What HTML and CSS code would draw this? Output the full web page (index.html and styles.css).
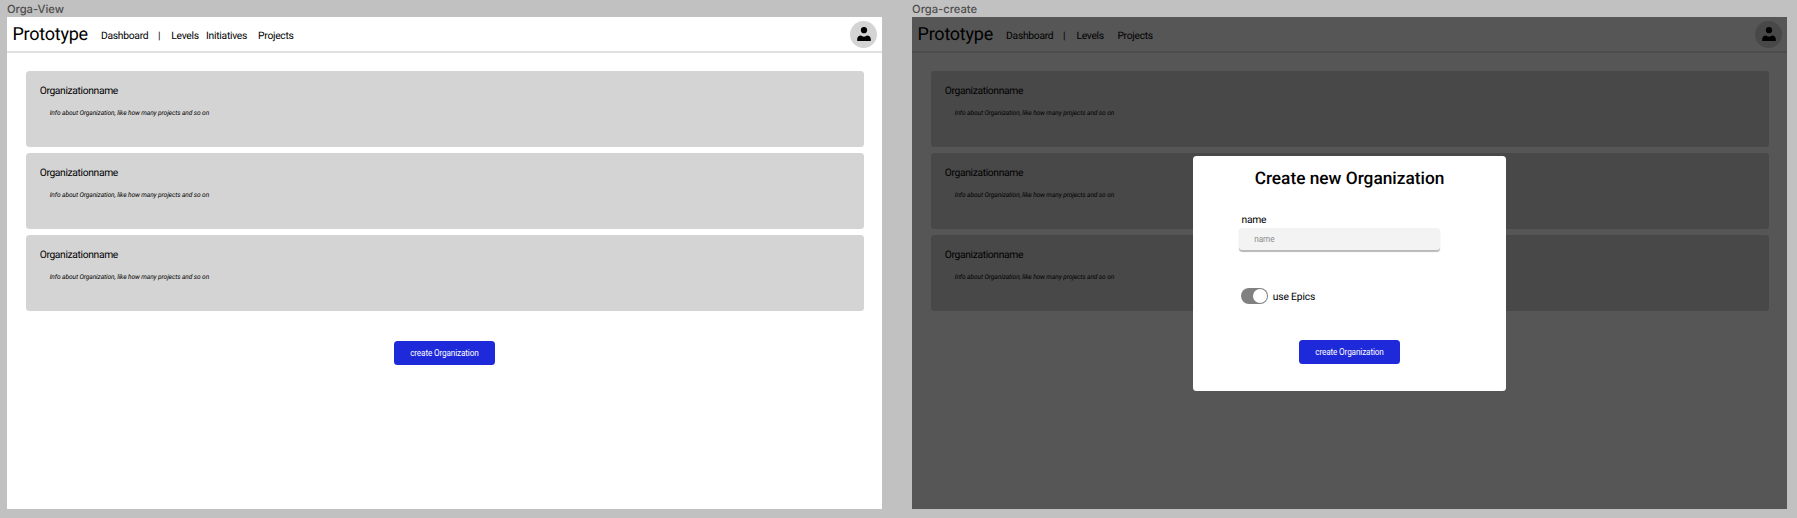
FILE: index.html
```html
<!DOCTYPE html>
<html lang="en">
<head>
<meta charset="utf-8">
<title>Prototype</title>
<link rel="stylesheet" href="styles.css">
</head>
<body>
<main class="canvas">
  <section class="artboard">
    <h2 class="artboard-name">Orga-View</h2>
    <div class="frame">
      <header class="topbar">
        <span class="brand">Prototype</span>
        <nav class="nav">
          <a class="dashboard">Dashboard</a><span class="divider">|</span><a class="levels">Levels</a><a class="initiatives">Initiatives</a><a class="projects">Projects</a>
        </nav>
        <span class="avatar"><svg viewBox="0 0 14 14"><circle cx="7" cy="3.2" r="3.1"/><path d="M0.2 13.9V12C0.2 10.2 1.8 8.8 3.9 8.6C5.5 10 8.5 10 10.1 8.6C12.2 8.8 13.8 10.2 13.8 12V13.9Z"/></svg></span>
      </header>
      <div class="cards">
        <article class="card"><h3>Organizationname</h3><p>Info about Organization, like how many projects and so on</p></article>
        <article class="card"><h3>Organizationname</h3><p>Info about Organization, like how many projects and so on</p></article>
        <article class="card"><h3>Organizationname</h3><p>Info about Organization, like how many projects and so on</p></article>
      </div>
      <button class="button">create Organization</button>
    </div>
  </section>
  <section class="artboard">
    <h2 class="artboard-name">Orga-create</h2>
    <div class="frame">
      <header class="topbar">
        <span class="brand">Prototype</span>
        <nav class="nav">
          <a class="dashboard">Dashboard</a><span class="divider">|</span><a class="levels levels-wide">Levels</a><a class="projects">Projects</a>
        </nav>
        <span class="avatar"><svg viewBox="0 0 14 14"><circle cx="7" cy="3.2" r="3.1"/><path d="M0.2 13.9V12C0.2 10.2 1.8 8.8 3.9 8.6C5.5 10 8.5 10 10.1 8.6C12.2 8.8 13.8 10.2 13.8 12V13.9Z"/></svg></span>
      </header>
      <div class="cards">
        <article class="card"><h3>Organizationname</h3><p>Info about Organization, like how many projects and so on</p></article>
        <article class="card"><h3>Organizationname</h3><p>Info about Organization, like how many projects and so on</p></article>
        <article class="card"><h3>Organizationname</h3><p>Info about Organization, like how many projects and so on</p></article>
      </div>
      <div class="overlay">
        <form class="modal">
          <h1>Create new Organization</h1>
          <label class="field-label" for="name">name</label>
          <input class="field" id="name" type="text" placeholder="name">
          <div class="toggle-row"><span class="toggle"></span><span class="toggle-label">use Epics</span></div>
          <button class="button" type="button">create Organization</button>
        </form>
      </div>
    </div>
  </section>
</main>
</body>
</html>
```
FILE: styles.css
```css
* { box-sizing: border-box; }

body {
  margin: 0;
  background: #c1c1c1;
  color: #000;
  font-family: Roboto, "Liberation Sans", sans-serif;
  text-rendering: geometricPrecision;
}

h1, h2, h3, p { margin: 0; }

.canvas {
  display: flex;
  gap: 30.3px;
  height: 518px;
  padding-left: 7px;
  overflow: hidden;
}

.artboard { flex: none; width: 874.8px; }

.artboard-name {
  height: 17px;
  padding-top: 2px;
  color: #4d4d4d;
  font: 500 11.2px/14px Inter, sans-serif;
}

.frame {
  position: relative;
  height: 492.4px;
  background: #fff;
}

.topbar {
  display: flex;
  align-items: center;
  height: 36px;
  padding: 0 4.6px 0 5.5px;
  border-bottom: 2px solid #e0e0e0;
}

.brand { width: 88.5px; padding-top: 2px; font-size: 18px; letter-spacing: -0.25px; line-height: 20px; }

.nav {
  display: flex;
  flex: 1;
  padding-top: 3px;
  font-size: 10.3px;
  letter-spacing: -0.28px;
  line-height: 12px;
}

.dashboard { width: 57px; }
.divider { width: 13.3px; }
.levels { width: 34.8px; }
.levels-wide { width: 41px; }
.initiatives { width: 52px; }

.avatar {
  display: flex;
  align-items: center;
  justify-content: center;
  width: 27px;
  height: 27px;
  border-radius: 50%;
  background: #d4d4d4;
}

.avatar svg { width: 14px; height: 14px; }

.cards {
  display: flex;
  flex-direction: column;
  gap: 5.7px;
  padding: 18px 18px 0 18.7px;
}

.card {
  height: 76.3px;
  padding: 14px 14px 0;
  border-radius: 3.5px;
  background: #d4d4d4;
}

.card h3 { font-size: 10.3px; font-weight: 400; letter-spacing: -0.36px; line-height: 12px; }
.card p { margin: 11px 0 0 10px; font-size: 6.6px; font-style: italic; letter-spacing: -0.09px; line-height: 10px; }

.button {
  display: block;
  width: 100.5px;
  height: 24px;
  margin: 29.7px auto 0;
  padding: 1px 0 0;
  border: 0;
  border-radius: 3.5px;
  background: #1e29da;
  color: #fff;
  font: 400 8.2px/23px Roboto, sans-serif;
  letter-spacing: -0.14px;
}

.overlay {
  position: absolute;
  inset: 0;
  display: flex;
  align-items: flex-start;
  justify-content: center;
  padding-top: 139.3px;
  background: rgba(0, 0, 0, 0.663);
}

.modal {
  width: 312.7px;
  height: 234.4px;
  padding: 12.7px 46px 0;
  border-radius: 3.5px;
  background: #fff;
}

.modal h1 { font-size: 17.3px; font-weight: 500; line-height: 20px; text-align: center; white-space: nowrap; }

.field-label { display: block; margin: 25px 0 0 2.4px; font-size: 10.3px; letter-spacing: -0.25px; line-height: 12px; }

.field {
  display: block;
  width: 201.2px;
  height: 22px;
  margin-top: 2px;
  padding: 1px 15px 0;
  border: 0;
  border-radius: 3.5px;
  background: #f3f3f3;
  box-shadow: 0 1.2px 1px rgba(0, 0, 0, 0.28);
  font: 400 8.2px Roboto, sans-serif;
}

.field::placeholder { color: #8c8c8c; opacity: 1; }

.toggle-row {
  display: flex;
  align-items: center;
  gap: 5.2px;
  height: 16px;
  margin: 38px 0 0 1.4px;
  font-size: 10.3px;
  letter-spacing: -0.16px;
  line-height: 12px;
}

.toggle {
  display: flex;
  justify-content: flex-end;
  width: 27px;
  height: 16px;
  padding: 1px;
  border-radius: 8px;
  background: #808080;
}

.toggle::after { content: ""; width: 14px; height: 14px; border-radius: 50%; background: #fff; }

.toggle-label { padding-top: 3px; }

.modal .button { margin: 36px auto 0; }
```
